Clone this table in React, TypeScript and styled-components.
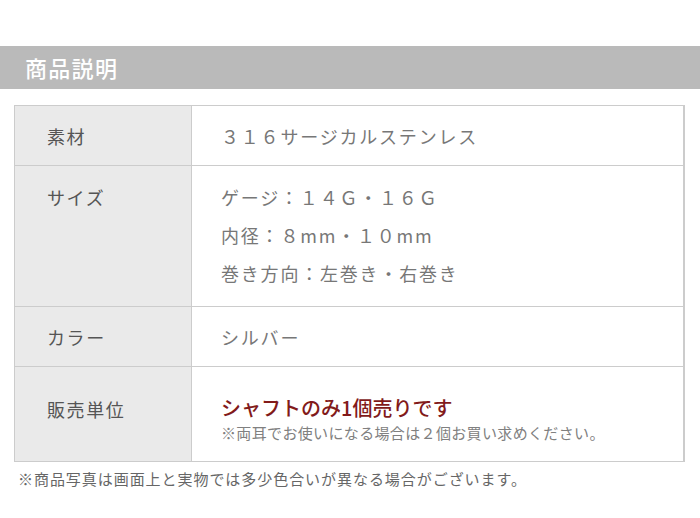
import React from "react";
import styled, { createGlobalStyle } from "styled-components";

const GlobalStyle = createGlobalStyle`
  body {
    margin: 0;
    background: #fff;
    font-family: "Noto Sans CJK JP", "Noto Sans", sans-serif;
  }
`;

const Page = styled.div`
  padding-top: 46px;
  width: 700px;
`;

const TitleBar = styled.h2`
  margin: 0;
  height: 43px;
  background-color: #bababa;
  color: #fff;
  font-size: 22px;
  font-weight: 500;
  letter-spacing: 1.3px;
  line-height: 43px;
  padding-left: 25px;
`;

const Table = styled.div`
  margin: 16px 0 0 14px;
  width: 668px;
  border: 1px solid #cccccc;
  border-right-width: 2px;
  border-bottom: none;
`;

const Row = styled.div`
  display: flex;
  border-bottom: 1px solid #cccccc;
`;

const Label = styled.div<{ $pad: number }>`
  width: 177px;
  flex-shrink: 0;
  background-color: #eaeaea;
  border-right: 1px solid #cccccc;
  box-sizing: border-box;
  padding: ${(p) => p.$pad}px 0 0 32px;
  color: #555;
  font-size: 18px;
  letter-spacing: 1.6px;
  line-height: 38px;
`;

const Value = styled.div<{ $pad: string }>`
  flex: 1;
  padding: ${(p) => p.$pad};
  color: #777;
  font-size: 18px;
  letter-spacing: 1.8px;
  line-height: 38px;
`;

const Line = styled.div``;

const Strong = styled.div`
  color: #821a1a;
  font-size: 20px;
  font-weight: 500;
  letter-spacing: 0;
  line-height: 26px;
`;

const SmallNote = styled.div`
  color: #808080;
  font-size: 15px;
  letter-spacing: 0.35px;
  line-height: 24px;
`;

const Footnote = styled.p`
  margin: 5px 0 0 18px;
  color: #666;
  font-size: 15px;
  letter-spacing: 0.95px;
  line-height: 24px;
`;

const App: React.FC = () => {
  return (
    <Page>
      <GlobalStyle />
      <TitleBar>商品説明</TitleBar>

      <Table>
        <Row>
          <Label $pad={11}>素材</Label>
          <Value $pad="11px 0 10px 29px">３１６サージカルステンレス</Value>
        </Row>

        <Row>
          <Label $pad={12}>サイズ</Label>
          <Value $pad="12px 0 14px 29px">
            <Line>ゲージ：１４Ｇ・１６Ｇ</Line>
            <Line>内径：８mm・１０mm</Line>
            <Line>巻き方向：左巻き・右巻き</Line>
          </Value>
        </Row>

        <Row>
          <Label $pad={11}>カラー</Label>
          <Value $pad="11px 0 10px 29px">シルバー</Value>
        </Row>

        <Row>
          <Label $pad={23}>販売単位</Label>
          <Value $pad="28px 0 16px 29px">
            <Strong>シャフトのみ1個売りです</Strong>
            <SmallNote>※両耳でお使いになる場合は２個お買い求めください。</SmallNote>
          </Value>
        </Row>
      </Table>

      <Footnote>※商品写真は画面上と実物では多少色合いが異なる場合がございます。</Footnote>
    </Page>
  );
};

export default App;
